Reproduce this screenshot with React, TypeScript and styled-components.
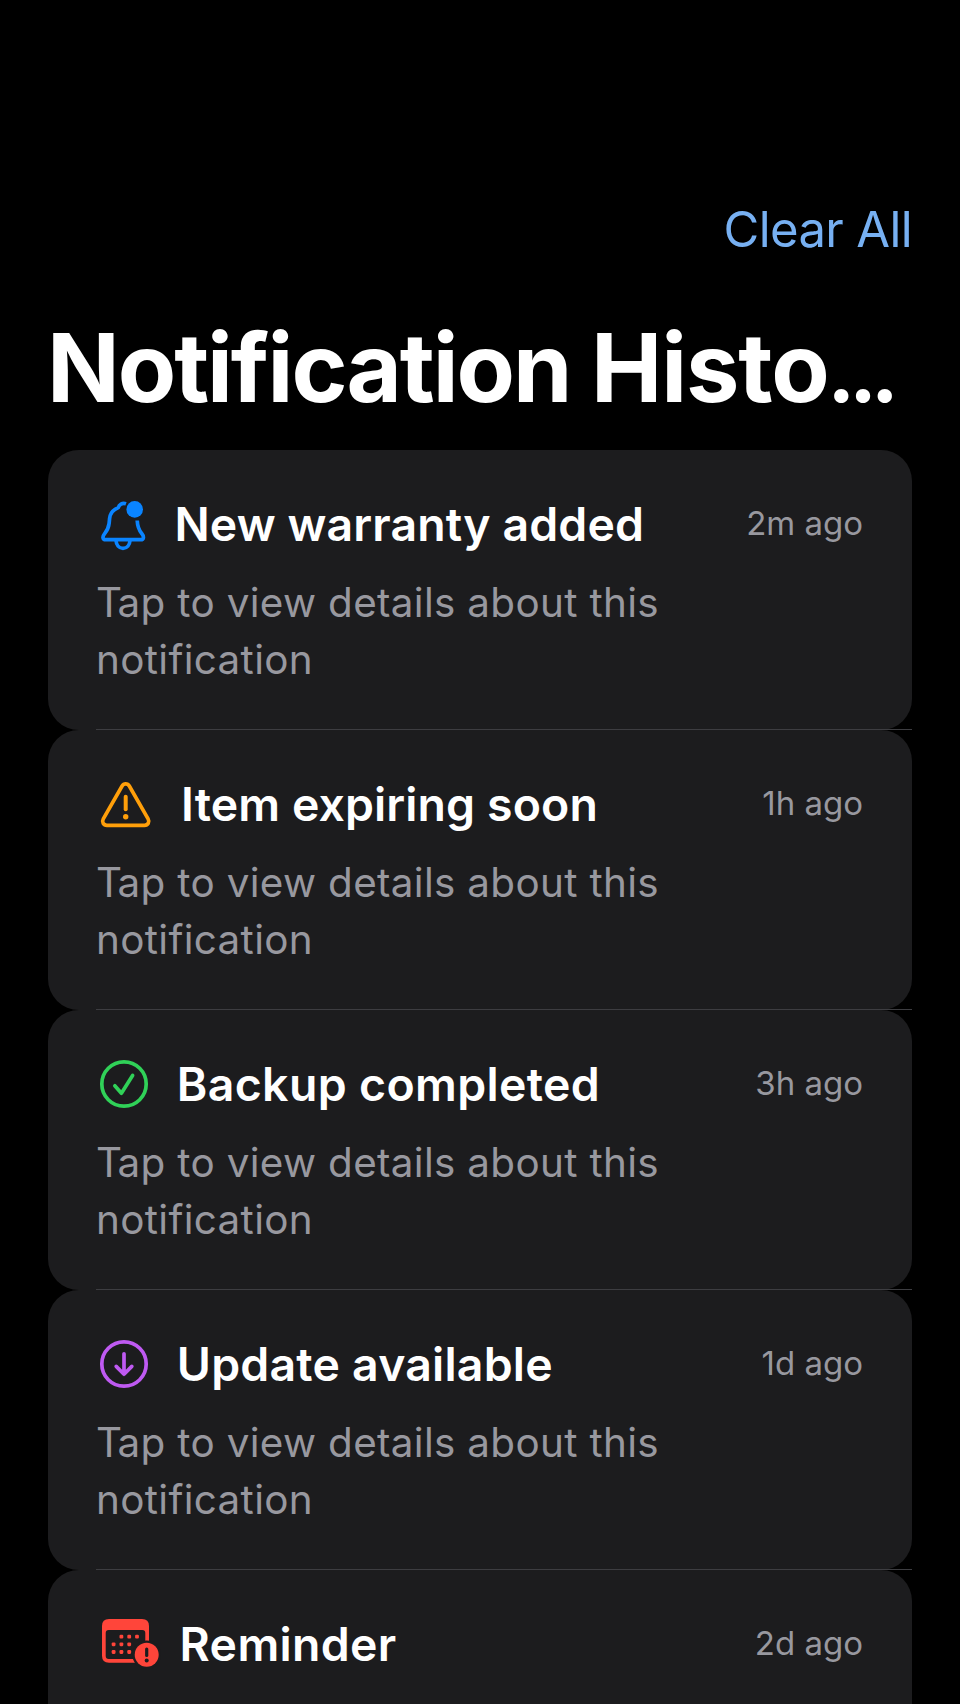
import React from 'react';
import styled, { createGlobalStyle } from 'styled-components';

const GlobalStyle = createGlobalStyle`
  *, *::before, *::after { box-sizing: border-box; }
  body {
    margin: 0;
    background: #000;
    color: #fff;
    font-family: Inter, 'Liberation Sans', sans-serif;
    -webkit-font-smoothing: antialiased;
  }
`;

const Screen = styled.main`
  height: 1704px;
  overflow: hidden;
  padding: 200px 48px 0;
  background: #000;
`;

const Toolbar = styled.header`
  display: flex;
  justify-content: flex-end;
  height: 60px;
`;

const ClearButton = styled.button`
  padding: 0;
  border: 0;
  background: none;
  color: #77b0f2;
  font: inherit;
  font-size: 49px;
  line-height: 60px;
  letter-spacing: -0.62px;
`;

const PageTitle = styled.h1`
  height: 120px;
  margin: 48px 0 22px -1px;
  font-size: 95.4px;
  font-weight: 700;
  line-height: 120px;
  letter-spacing: -2.03px;
  white-space: nowrap;
`;

const LastWord = styled.span`
  letter-spacing: -1.03px;
`;

const Ellipsis = styled.span`
  margin-left: -1.7px;
  font-size: 84px;
  line-height: 1;
  letter-spacing: -6.3px;
`;

const List = styled.ul`
  margin: 0;
  padding: 0;
  list-style: none;
`;

const Card = styled.li`
  position: relative;
  height: 280px;
  padding: 44px 49px 0;
  border-radius: 31px;
  background: #1c1c1e;

  &::after {
    content: '';
    position: absolute;
    left: 48px;
    right: 0;
    bottom: 0;
    height: 1px;
    background: #3d3d41;
  }
`;

const CardHeader = styled.div`
  display: flex;
  align-items: flex-start;
  height: 60px;
`;

const Glyph = styled.svg<{ $color: string; $width: number }>`
  flex: none;
  width: ${(p) => p.$width}px;
  height: 60px;
  margin-right: 24px;
  overflow: visible;
  color: ${(p) => p.$color};
  fill: none;
  stroke: currentColor;
  stroke-width: 3.7;
  stroke-linejoin: round;
`;

const CardTitle = styled.h2<{ $tracking: number }>`
  flex: 1;
  margin: 0;
  font-size: 46.4px;
  font-weight: 600;
  line-height: 60px;
  letter-spacing: ${(p) => p.$tracking}px;
  white-space: nowrap;
`;

const Time = styled.time`
  color: #98989f;
  font-size: 33px;
  line-height: 58px;
`;

const Description = styled.p`
  width: 640px;
  margin: 20px 0 0 -1px;
  color: #98989f;
  font-size: 40.4px;
  line-height: 57.4px;
  letter-spacing: 0.33px;

  &::first-letter {
    letter-spacing: -4.5px;
  }
`;

const BellIcon = () => (
  <Glyph $color="#0a84ff" $width={53.5} aria-hidden="true">
    <path d="M29 9.7C25.2 8.4 22 10.6 21.3 13.6C15.4 16 13.1 19.4 12.6 24.5L12.1 29.5C11.6 34 10 36.7 7.5 39.8C5.1 42.7 5.6 45.7 8.7 45.7H43.7C46.8 45.7 47.3 42.7 44.9 39.8C41.9 36.2 40.5 33 40.2 26.5" />
    <path d="M19 46.5C19.3 51 22 54.3 26 54.3C30 54.3 32.7 51 33 46.5" />
    <circle cx="37.7" cy="15.4" r="8.3" fill="currentColor" stroke="none" />
  </Glyph>
);

const WarningIcon = () => (
  <Glyph $color="#ff9f0a" $width={60} aria-hidden="true">
    <path d="M25.1 12C26.7 9.2 30.7 9.2 32.3 12L51.1 44.8C52.9 48 50.9 51.3 47.5 51.3H9.9C6.5 51.3 4.5 48 6.3 44.8Z" />
    <path d="M28.7 22.7V35.3" strokeWidth="4" strokeLinecap="round" />
    <circle cx="28.7" cy="42.7" r="2.7" fill="currentColor" stroke="none" />
  </Glyph>
);

const CheckIcon = () => (
  <Glyph $color="#30d158" $width={55.8} aria-hidden="true">
    <circle cx="27" cy="30" r="22.2" />
    <path d="M17.8 31.8L24.4 39.2L35.6 21.4" strokeLinecap="round" />
  </Glyph>
);

const DownloadIcon = () => (
  <Glyph $color="#bf5af2" $width={55.8} aria-hidden="true">
    <circle cx="27" cy="30" r="22.2" />
    <path d="M27 19.8V40M19.2 32.4L27 40.2L34.8 32.4" strokeLinecap="round" />
  </Glyph>
);

const calendarDays = [
  [24.4, 22.7], [32.2, 22.7], [40, 22.7],
  [16.6, 30.3], [24.4, 30.3], [32.2, 30.3],
  [16.6, 38], [24.4, 38], [32.2, 38],
];

const CalendarIcon = () => (
  <Glyph $color="#ff453a" $width={58.6} aria-hidden="true">
    <path
      fill="currentColor"
      fillRule="evenodd"
      stroke="none"
      d="M12 5H45Q52 5 52 12V41.7Q52 48.7 45 48.7H12Q5 48.7 5 41.7V12Q5 5 12 5ZM11.7 16Q8.7 16 8.7 19V42Q8.7 45 11.7 45H45.3Q48.3 45 48.3 42V19Q48.3 16 45.3 16Z"
    />
    {calendarDays.map(([x, y]) => (
      <rect key={`${x}-${y}`} x={x - 1.9} y={y - 1.9} width="3.8" height="3.8" rx="1.1" fill="currentColor" stroke="none" />
    ))}
    <circle cx="49.7" cy="40.7" r="14.3" fill="#1c1c1e" stroke="none" />
    <circle cx="49.7" cy="40.7" r="12" fill="currentColor" stroke="none" />
    <path d="M49.7 35V41.4" stroke="#1c1c1e" strokeWidth="3.2" strokeLinecap="round" />
    <circle cx="49.7" cy="46.4" r="2" fill="#1c1c1e" stroke="none" />
  </Glyph>
);

const detail = 'Tap to view details about this notification';

const notifications = [
  { title: 'New warranty added', time: '2m ago', Icon: BellIcon, tracking: 0.13, detail },
  { title: 'Item expiring soon', time: '1h ago', Icon: WarningIcon, tracking: 0.12, detail },
  { title: 'Backup completed', time: '3h ago', Icon: CheckIcon, tracking: 0.36, detail },
  { title: 'Update available', time: '1d ago', Icon: DownloadIcon, tracking: 0.22, detail },
  { title: 'Reminder', time: '2d ago', Icon: CalendarIcon, tracking: 0.34 },
];

export default function App() {
  return (
    <>
      <GlobalStyle />
      <Screen>
        <Toolbar>
          <ClearButton type="button">Clear All</ClearButton>
        </Toolbar>
        <PageTitle>
          Notification <LastWord>Histo</LastWord>
          <Ellipsis>...</Ellipsis>
        </PageTitle>
        <List>
          {notifications.map(({ title, time, Icon, tracking, detail: text }) => (
            <Card key={title}>
              <CardHeader>
                <Icon />
                <CardTitle $tracking={tracking}>{title}</CardTitle>
                <Time>{time}</Time>
              </CardHeader>
              {text && <Description>{text}</Description>}
            </Card>
          ))}
        </List>
      </Screen>
    </>
  );
}
